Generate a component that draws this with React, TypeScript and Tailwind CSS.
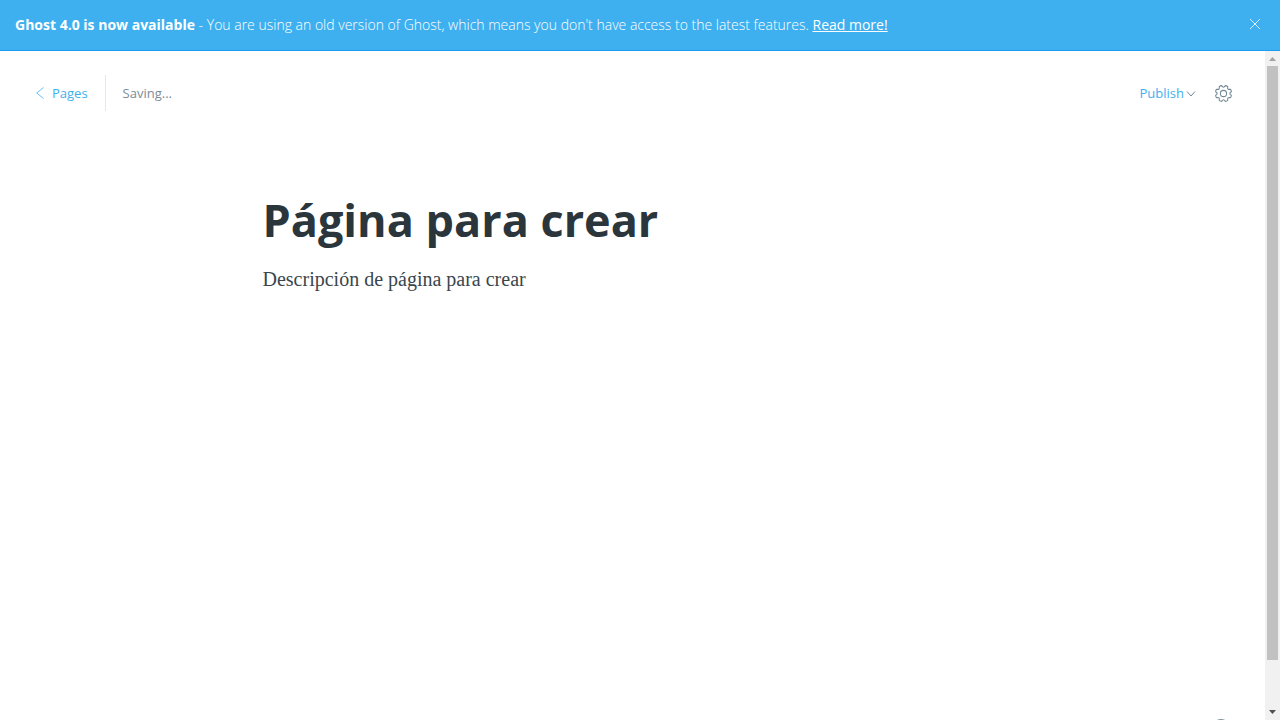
import React from "react";

const point = (radius: number, degrees: number) => {
  const a = (degrees * Math.PI) / 180;
  return `${(12 + radius * Math.cos(a)).toFixed(2)} ${(12 + radius * Math.sin(a)).toFixed(2)}`;
};

const gearPath =
  `M${point(11.4, -13)}` +
  Array.from({ length: 8 }, (_, i) => i * 45)
    .map((d) => `Q${point(6.8, d)} ${point(11.4, d + 13)}Q${point(12, d + 22.5)} ${point(11.4, d + 32)}`)
    .join("") +
  "Z";

function Banner() {
  return (
    <aside className="flex shrink-0 items-center justify-between border-b border-[#1a9cec] bg-[#3eb0ef] py-3 pr-4 pl-[15px] text-white">
      <p className="text-sm leading-[26px] font-light">
        <b className="font-bold">Ghost 4.0 is now available</b> - You are using an old version of Ghost, which means you
        don't have access to the latest features.{" "}
        <a href="#changelog" className="font-normal underline underline-offset-1">
          Read more!
        </a>
      </p>
      <button type="button" aria-label="Close" className="mb-0.5 p-1">
        <svg viewBox="0 0 10 10" className="size-2.5 overflow-visible" fill="none" stroke="currentColor" strokeWidth="0.8">
          <path d="M0 0l10 10M10 0L0 10" />
        </svg>
      </button>
    </aside>
  );
}

function Toolbar() {
  return (
    <header className="flex items-center justify-between py-6 pr-[33px] pl-9 text-[13px] leading-9">
      <div className="flex h-9 items-center">
        <a href="#pages" className="flex items-center gap-2 pr-[17px] text-[#3eb0ef]">
          <svg viewBox="0 0 8 12" className="h-3 w-2" fill="none" stroke="currentColor" strokeWidth="0.8">
            <path d="M7.5 0.5L0.7 6l6.8 5.5" />
          </svg>
          Pages
        </a>
        <span className="h-9 border-l border-[#dfe9f1] pl-[17px] text-[#7c8b9a]">Saving...</span>
      </div>
      <div className="flex items-center gap-5">
        <button type="button" className="flex items-center gap-[3px] text-[#3eb0ef]">
          Publish
          <svg viewBox="0 0 8 6" className="mt-0.5 h-1.5 w-2 overflow-visible" fill="none" stroke="#738a94">
            <path d="M0 0.5l4 4.5l4-4.5" />
          </svg>
        </button>
        <button type="button" aria-label="Settings" className="text-[#738a94]">
          <svg viewBox="0 0 24 24" className="size-[17px]" fill="none" stroke="currentColor" strokeWidth="1.5" strokeLinejoin="round">
            <path d={gearPath} />
            <circle cx="12" cy="12" r="4.4" />
          </svg>
        </button>
      </div>
    </header>
  );
}

function Scrollbar() {
  return (
    <div aria-hidden="true" className="flex w-[15px] shrink-0 flex-col items-center bg-[#f1f1f1]">
      <svg viewBox="0 0 15 15" className="size-[15px] shrink-0" fill="#a3a3a3">
        <path d="M4 10h7L7.5 6z" />
      </svg>
      <div className="flex w-[11px] flex-1 flex-col">
        <div className="grow-[594] bg-[#c1c1c1]" />
        <div className="grow-[45]" />
      </div>
      <svg viewBox="0 0 15 15" className="size-[15px] shrink-0" fill="#505050">
        <path d="M4 5h7L7.5 9z" />
      </svg>
    </div>
  );
}

export default function App() {
  return (
    <div className="flex h-screen flex-col overflow-hidden bg-white font-['Open_Sans',sans-serif]">
      <Banner />
      <div className="flex min-h-0 flex-1">
        <div className="relative min-w-0 flex-1 overflow-hidden">
          <Toolbar />
          <main className="mx-auto flex w-full max-w-[740px] flex-col pt-[54px]">
            <input
              aria-label="Page title"
              defaultValue="Página para crear"
              className="h-[62px] w-full text-[45px] font-bold text-[#2b363c] outline-none"
            />
            <textarea
              aria-label="Page content"
              rows={4}
              defaultValue="Descripción de página para crear"
              className="mt-3 w-full resize-none font-['Liberation_Serif',serif] text-xl leading-8 text-[#3a464c] outline-none"
            />
          </main>
          <button
            type="button"
            aria-label="Help"
            className="absolute right-[35px] -bottom-[17px] size-[18px] rounded-full border border-[#738a94]"
          />
        </div>
        <Scrollbar />
      </div>
    </div>
  );
}
